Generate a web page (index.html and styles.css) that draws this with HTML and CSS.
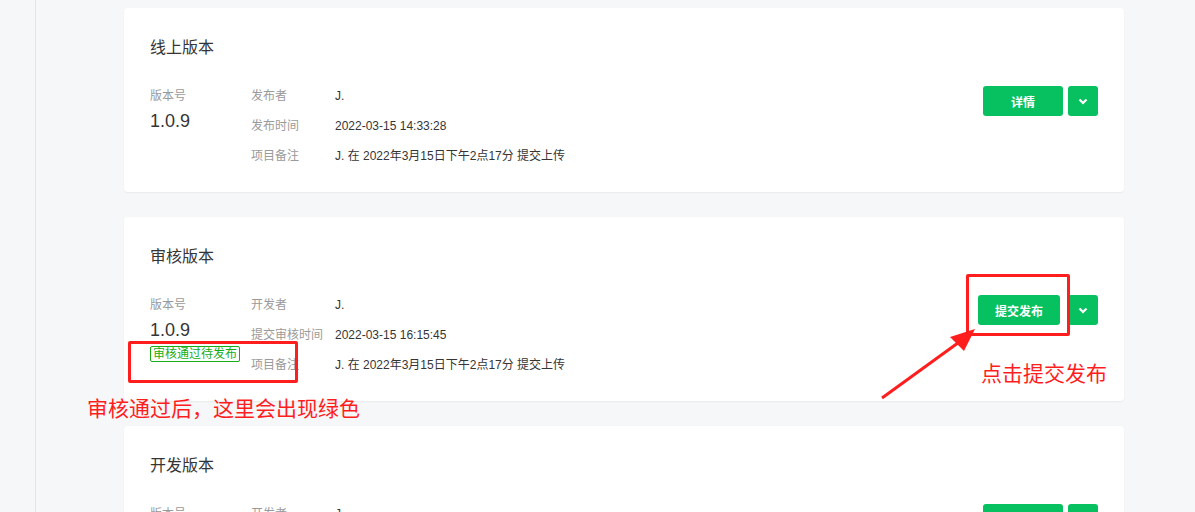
FILE: index.html
```html
<!DOCTYPE html>
<html lang="zh-CN">
<head>
    <meta charset="UTF-8">
    <title>版本管理</title>
    <link rel="stylesheet" href="styles.css">
</head>
<body>
    <div class="layout">
        <div class="sidebar"></div>
        <div class="main">
            <div class="card">
                <h2 class="card-title">线上版本</h2>
                <div class="card-body">
                    <div class="version">
                        <div class="version-label">版本号</div>
                        <div class="version-num">1.0.9</div>
                    </div>
                    <div class="info">
                        <div class="info-row"><span class="info-label">发布者</span><span class="info-value">J.</span></div>
                        <div class="info-row"><span class="info-label">发布时间</span><span class="info-value">2022-03-15 14:33:28</span></div>
                        <div class="info-row"><span class="info-label">项目备注</span><span class="info-value">J. 在 2022年3月15日下午2点17分 提交上传</span></div>
                    </div>
                    <div class="actions">
                        <button class="btn">详情</button>
                        <button class="btn btn-more"><svg width="10" height="7" viewBox="0 0 10 7"><path d="M1.5 1.5 L5 5 L8.5 1.5" fill="none" stroke="#fff" stroke-width="2.2"/></svg></button>
                    </div>
                </div>
            </div>

            <div class="card">
                <h2 class="card-title">审核版本</h2>
                <div class="card-body">
                    <div class="version">
                        <div class="version-label">版本号</div>
                        <div class="version-num">1.0.9</div>
                        <span class="badge">审核通过待发布</span>
                    </div>
                    <div class="info">
                        <div class="info-row"><span class="info-label">开发者</span><span class="info-value">J.</span></div>
                        <div class="info-row"><span class="info-label">提交审核时间</span><span class="info-value">2022-03-15 16:15:45</span></div>
                        <div class="info-row"><span class="info-label">项目备注</span><span class="info-value">J. 在 2022年3月15日下午2点17分 提交上传</span></div>
                    </div>
                    <div class="actions">
                        <button class="btn btn-wide">提交发布</button>
                        <button class="btn btn-more spaced"><svg width="10" height="7" viewBox="0 0 10 7"><path d="M1.5 1.5 L5 5 L8.5 1.5" fill="none" stroke="#fff" stroke-width="2.2"/></svg></button>
                    </div>
                </div>
            </div>

            <div class="card">
                <h2 class="card-title">开发版本</h2>
                <div class="card-body">
                    <div class="version">
                        <div class="version-label">版本号</div>
                        <div class="version-num">1.0.9</div>
                    </div>
                    <div class="info">
                        <div class="info-row"><span class="info-label">开发者</span><span class="info-value">J.</span></div>
                    </div>
                    <div class="actions">
                        <button class="btn">提交审核</button>
                        <button class="btn btn-more"><svg width="10" height="7" viewBox="0 0 10 7"><path d="M1.5 1.5 L5 5 L8.5 1.5" fill="none" stroke="#fff" stroke-width="2.2"/></svg></button>
                    </div>
                </div>
            </div>
        </div>
    </div>

    <!-- screenshot annotations -->
    <div class="mark mark-badge"></div>
    <div class="mark mark-submit"></div>
    <svg class="arrow" width="110" height="80" viewBox="0 0 110 80">
        <path d="M2 77 L82 19" stroke="#ff1e1e" stroke-width="3" fill="none"/>
        <path d="M95 8 L70 16 L84 30 Z" fill="#ff1e1e"/>
    </svg>
    <div class="note note-left">审核通过后，这里会出现绿色</div>
    <div class="note note-right">点击提交发布</div>
</body>
</html>
```

FILE: styles.css
```css
* {
    box-sizing: border-box;
    margin: 0;
    padding: 0;
}

body {
    font-family: "Liberation Sans", "Noto Sans CJK SC", sans-serif;
    background-color: #f6f7f9;
    color: #353535;
    height: 512px;
    overflow: hidden;
}

.layout {
    display: flex;
    height: 512px;
}

.sidebar {
    width: 36px;
    border-right: 1px solid #e3e5e8;
}

.main {
    padding: 8px 0 0 88px;
}

.card {
    width: 1000px;
    background-color: #fff;
    border-radius: 4px;
    box-shadow: 0 1px 2px rgba(0, 0, 0, 0.06);
    padding: 29px 26px 21px 26px;
    margin-bottom: 25px;
}

.card-title {
    font-size: 16px;
    font-weight: normal;
    line-height: 22px;
    color: #353535;
}

.card-body {
    display: flex;
    margin-top: 22px;
}

.version {
    width: 101px;
}

.version-label {
    font-size: 12px;
    line-height: 30px;
    color: #9a9a9a;
}

.version-num {
    font-size: 18px;
    line-height: 20px;
    color: #353535;
}

.badge {
    display: inline-block;
    margin-top: 6px;
    padding: 0 2px;
    font-size: 12px;
    line-height: 14px;
    color: #17ad17;
    border: 1px solid #17ad17;
    border-radius: 2px;
}

.info {
    flex: 1;
}

.info-row {
    display: flex;
    font-size: 12px;
    line-height: 30px;
}

.info-label {
    width: 84px;
    color: #9a9a9a;
}

.info-value {
    color: #353535;
}

.actions {
    display: flex;
    gap: 5px;
    margin-top: 5px;
}

.btn {
    height: 30px;
    width: 80px;
    border: none;
    border-radius: 3px;
    background-color: #07c160;
    color: #fff;
    font-family: inherit;
    font-size: 12px;
    font-weight: bold;
    cursor: pointer;
}

.btn-wide {
    width: 82px;
}

.btn-more {
    width: 30px;
    display: flex;
    align-items: center;
    justify-content: center;
}

.spaced {
    margin-left: 3px;
}

/* annotations drawn over the screenshot */
.mark {
    position: absolute;
    border: 3px solid #ff1e1e;
    border-radius: 2px;
}

.mark-badge {
    left: 128px;
    top: 341px;
    width: 170px;
    height: 42px;
}

.mark-submit {
    left: 966px;
    top: 274px;
    width: 104px;
    height: 62px;
}

.arrow {
    position: absolute;
    left: 880px;
    top: 321px;
}

.note {
    position: absolute;
    font-size: 21px;
    line-height: 26px;
    color: #ff1e1e;
}

.note-left {
    left: 87px;
    top: 396px;
}

.note-right {
    left: 981px;
    top: 361px;
}
```
